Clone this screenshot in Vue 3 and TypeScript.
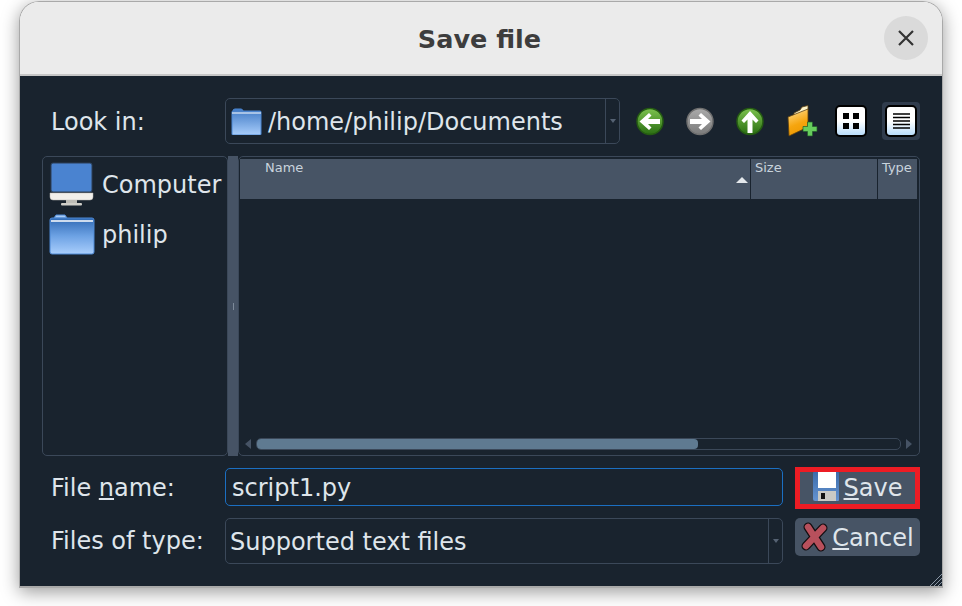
<template>
  <div class="window">
    <header class="titlebar">
      <h1 class="titlebar__title">Save file</h1>
      <button type="button" class="titlebar__close" aria-label="Close">
        <svg width="18" height="18" viewBox="0 0 18 18">
          <path d="M2 2 16 16M16 2 2 16" stroke="#333" stroke-width="2.2" fill="none" />
        </svg>
      </button>
    </header>

    <main class="dialog">
      <div class="top-row">
        <label class="field-label field-label--low">Look in:</label>
        <div class="combo combo--path">
          <svg class="combo__folder" width="31" height="27" viewBox="0 0 31 27">
            <defs>
              <linearGradient id="folderSmall" x1="0" y1="0" x2="0" y2="1">
                <stop offset="0" stop-color="#3f79c4" />
                <stop offset="1" stop-color="#a8cdfb" />
              </linearGradient>
            </defs>
            <path d="M2 3q0-2 2-2h6q1.500 0 2 2h17q1 0 1 1v22q0 1-1 1H2q-1 0-1-1V4q0-1 1-1z" fill="url(#folderSmall)" stroke="#4d88d4" />
            <path d="M1 5h29" stroke="#fff" stroke-width="1.200" />
          </svg>
          <span class="combo__text">/home/philip/Documents</span>
          <span class="combo__arrow"><i></i></span>
        </div>
        <div class="toolbar">
          <button v-for="tool in navTools" :key="tool.name" type="button" class="tool tool--nav" :aria-label="tool.name">
            <svg width="28" height="29" viewBox="0 0 28 29">
              <defs>
                <linearGradient :id="`disc-${tool.name}`" x1="0" y1="0" x2="0" y2="1">
                  <stop offset="0" :stop-color="tool.light" />
                  <stop offset="1" :stop-color="tool.dark" />
                </linearGradient>
              </defs>
              <circle cx="14" cy="14.500" r="13" :fill="`url(#disc-${tool.name})`" :stroke="tool.rim" stroke-width="1.500" />
              <path :d="tool.arrow" fill="#fff" />
            </svg>
          </button>
          <button type="button" class="tool" aria-label="New folder">
            <svg width="30" height="32" viewBox="0 0 30 32">
              <defs>
                <linearGradient id="newFolder" x1="0" y1="0" x2="0.300" y2="1">
                  <stop offset="0" stop-color="#fff0c4" />
                  <stop offset="0.350" stop-color="#fbc04a" />
                  <stop offset="0.650" stop-color="#f6a50e" />
                  <stop offset="1" stop-color="#ee9a04" />
                </linearGradient>
              </defs>
              <path d="M8 8 14 5l2-3 6-1.500V6L8 12z" fill="#fdf3c8" stroke="#5d4010" stroke-width="0.800" />
              <path d="M2 12 22 4v18L3 31z" fill="url(#newFolder)" stroke="#5d4010" stroke-width="0.800" />
              <path d="M21.500 17h5v4.500H31v5h-4.500V31h-5v-4.500H17v-5h4.500z" fill="#66cc5c" stroke="#1f5a28" stroke-width="0.700" />
            </svg>
          </button>
          <button type="button" class="tool" aria-label="Icon view">
            <span class="view-btn">
              <svg width="16" height="16" viewBox="0 0 16 16">
                <path d="M0 0h6v6H0zM10 0h6v6h-6zM0 10h6v6H0zM10 10h6v6h-6z" fill="#000" />
              </svg>
            </span>
          </button>
          <button type="button" class="tool tool--active" aria-label="Detail view">
            <span class="view-btn">
              <svg width="17" height="16" viewBox="0 0 17 16">
                <path d="M0 1h17M0 4.500h17M0 8h17M0 11.500h17M0 15h17" stroke="#000" stroke-width="1.600" />
              </svg>
            </span>
          </button>
        </div>
      </div>

      <div class="browser">
        <aside class="sidebar">
          <div class="place">
            <svg class="place__icon" width="46" height="44" viewBox="0 0 46 44">
              <rect x="2" y="1" width="41" height="29" rx="2" fill="#4a83d0" stroke="#2c3f57" />
              <path d="M1 31h43v4q0 3-3 3H4q-3 0-3-3z" fill="#f1efeb" stroke="#b9b7b0" stroke-width="0.500" />
              <rect x="17" y="38" width="11" height="3" fill="#bdbcb6" />
              <rect x="12" y="41" width="21" height="2.500" rx="1" fill="#d0cfc9" />
            </svg>
            <span class="place__label">Computer</span>
          </div>
          <div class="place">
            <svg class="place__icon" width="46" height="41" viewBox="0 0 46 41">
              <defs>
                <linearGradient id="folderBig" x1="0" y1="0" x2="0" y2="1">
                  <stop offset="0" stop-color="#2f69b4" />
                  <stop offset="0.500" stop-color="#6da2e4" />
                  <stop offset="1" stop-color="#a9cefc" />
                </linearGradient>
              </defs>
              <path d="M5 4l2-3h9l2 3z" fill="#a9cbf5" stroke="#4d88d4" />
              <rect x="1" y="4" width="44" height="36" rx="2" fill="url(#folderBig)" stroke="#4d88d4" />
              <path d="M2 7h42" stroke="#fff" stroke-width="1.500" />
            </svg>
            <span class="place__label">philip</span>
          </div>
        </aside>
        <div class="splitter"><i></i></div>
        <section class="files">
          <div class="files__head">
            <div v-for="col in columns" :key="col.label" class="column" :class="col.cls">
              {{ col.label }}
            </div>
          </div>
          <div class="files__body"></div>
          <div class="hscroll">
            <i class="hscroll__arrow hscroll__arrow--left"></i>
            <div class="hscroll__track"><div class="hscroll__thumb"></div></div>
            <i class="hscroll__arrow hscroll__arrow--right"></i>
          </div>
        </section>
      </div>

      <div class="bottom">
        <label class="field-label field-label--low">File <u>n</u>ame:</label>
        <input class="name-input" type="text" value="script1.py" />
        <button type="button" class="action action--save">
          <svg width="26" height="29" viewBox="0 0 26 29">
            <defs>
              <linearGradient id="floppy" x1="0" y1="0" x2="0" y2="1">
                <stop offset="0" stop-color="#3c6cab" />
                <stop offset="1" stop-color="#6593d0" />
              </linearGradient>
            </defs>
            <path d="M1 0h24q1 0 1 1v27q0 1-1 1H2q-2 0-2-2V1q0-1 1-1z" fill="url(#floppy)" />
            <rect x="5" y="0" width="18" height="16" fill="#fff" />
            <rect x="5" y="19" width="18" height="10" fill="#c9c9c5" />
            <rect x="8" y="21" width="4" height="6" fill="#111" />
          </svg>
          <span><u>S</u>ave</span>
        </button>
        <label class="field-label">Files of type:</label>
        <div class="combo combo--type">
          <span class="combo__text">Supported text files</span>
          <span class="combo__arrow"><i></i></span>
        </div>
        <button type="button" class="action action--cancel">
          <svg width="27" height="30" viewBox="0 0 27 30">
            <path d="M7 5 20 25M22 6 5 24" stroke="#120d10" stroke-width="9" stroke-linecap="round" fill="none" />
            <path d="M7 5 20 25M22 6 5 24" stroke="#b8505c" stroke-width="6.500" stroke-linecap="round" fill="none" />
          </svg>
          <span class="action__label"><u>C</u>ancel</span>
        </button>
      </div>

      <svg class="grip" width="13" height="13" viewBox="0 0 13 13">
        <path d="M13 1 1 13M13 5 5 13M13 9 9 13" stroke="#8a97a6" stroke-width="1" />
      </svg>
    </main>
  </div>
</template>

<script setup lang="ts">
interface NavTool {
  name: string
  light: string
  dark: string
  rim: string
  arrow: string
}

const navTools: NavTool[] = [
  {
    name: 'back',
    light: '#7cc24e',
    dark: '#2a6e12',
    rim: '#255c12',
    arrow: 'M3.500 14.500 13 6l2.500 2.500-3.500 3.500h12v5H12l3.500 3.500L13 23z'
  },
  {
    name: 'forward',
    light: '#aaaaaa',
    dark: '#7b7b7b',
    rim: '#6f6f6f',
    arrow: 'M24.500 14.500 15 6l-2.500 2.500 3.500 3.500H4v5h12l-3.500 3.500L15 23z'
  },
  {
    name: 'up',
    light: '#7cc24e',
    dark: '#2a6e12',
    rim: '#255c12',
    arrow: 'M14 4 22.500 13.500 20 16l-3.500-3.500V26h-5V12.500L8 16l-2.500-2.500z'
  }
]

const columns = [
  { label: 'Name', cls: 'column--name' },
  { label: 'Size', cls: 'column--size' },
  { label: 'Type', cls: 'column--type' }
]
</script>

<style>
html,
body {
  background: #fff;
  height: 100%;
}

#app {
  height: 606px;
  overflow: hidden;
  display: flow-root;
}
</style>

<style scoped>
.window {
  box-sizing: border-box;
  width: 924px;
  height: 587px;
  margin: 1px 0 0 19px;
  border: 1px solid #a9a9a9;
  border-bottom-width: 2px;
  border-radius: 20px 20px 0 0;
  box-shadow: 0 4px 18px rgba(0, 0, 0, 0.4);
  display: flex;
  flex-direction: column;
  font-family: "DejaVu Sans", sans-serif;
  font-size: 24px;
  color: #dfe5eb;
  overflow: hidden;
}

.titlebar {
  flex: 0 0 74px;
  box-sizing: border-box;
  background: #ebebeb;
  border-bottom: 2px solid #c6c6c6;
  display: flex;
  align-items: center;
  justify-content: center;
  position: relative;
}

.titlebar__title {
  margin: 2px 0 0 -3px;
  font-size: 25.500px;
  font-weight: 700;
  color: #3d3d3d;
}

.titlebar__close {
  position: absolute;
  right: 14px;
  top: 14px;
  width: 44px;
  height: 44px;
  padding: 0;
  border: none;
  border-radius: 50%;
  background: #dadada;
  display: flex;
  align-items: center;
  justify-content: center;
}

.dialog {
  flex: 1;
  background: #19232e;
  padding: 22px 22px 0;
  display: flex;
  flex-direction: column;
  gap: 12px;
  position: relative;
}

.top-row {
  display: flex;
  align-items: center;
  height: 46px;
}

.field-label {
  flex: 0 0 174px;
  padding-left: 9px;
  white-space: nowrap;
}

.field-label--low {
  padding-top: 2px;
}

.combo {
  box-sizing: border-box;
  height: 46px;
  border: 1px solid #3b4859;
  border-radius: 5px;
  display: flex;
  align-items: center;
}

.combo--path {
  flex: 0 0 395px;
  padding-left: 5px;
}

.combo__folder {
  flex-shrink: 0;
  margin-right: 6px;
}

.combo__text {
  flex: 1;
  padding-top: 2px;
  white-space: nowrap;
}

.combo--type {
  padding-left: 4px;
}

.combo__arrow {
  flex: 0 0 13px;
  align-self: stretch;
  border-left: 1px solid #3b4859;
  display: flex;
  align-items: center;
  justify-content: center;
}

.combo__arrow i {
  width: 0;
  height: 0;
  border-left: 3.500px solid transparent;
  border-right: 3.500px solid transparent;
  border-top: 4px solid #556273;
}

.toolbar {
  flex: 1;
  display: flex;
  justify-content: flex-end;
  gap: 12px;
}

.tool {
  box-sizing: border-box;
  width: 38px;
  height: 38px;
  padding: 0;
  border: none;
  border-radius: 4px;
  background: transparent;
  display: flex;
  align-items: center;
  justify-content: center;
}

.tool svg {
  overflow: visible;
}

.tool--nav {
  padding-right: 2px;
}

.tool--active {
  background: #303c4d;
}

.view-btn {
  box-sizing: border-box;
  width: 32px;
  height: 32px;
  border: 2px solid #000;
  border-radius: 5px;
  background: linear-gradient(#fff 50%, #b9dcfb);
  display: flex;
  align-items: center;
  justify-content: center;
}

.browser {
  display: flex;
  height: 300px;
}

.sidebar {
  box-sizing: border-box;
  flex: 0 0 186px;
  border: 1px solid #3b4859;
  border-radius: 5px;
  padding-top: 2px;
}

.place {
  height: 50px;
  display: flex;
  align-items: center;
  padding-left: 6px;
  white-space: nowrap;
}

.place__icon {
  flex: 0 0 46px;
  margin-right: 7px;
}

.place__label {
  padding-top: 2px;
}

.splitter {
  flex: 0 0 10px;
  background: #465365;
  display: flex;
  align-items: center;
  justify-content: center;
}

.splitter i {
  width: 1px;
  height: 7px;
  background: #7d8a9a;
}

.files {
  flex: 1;
  box-sizing: border-box;
  border: 1px solid #3b4859;
  border-radius: 5px;
  padding: 2px 2px 0 1px;
  display: flex;
  flex-direction: column;
}

.files__head {
  display: flex;
  height: 40px;
  background: #475465;
  font-size: 13px;
  line-height: 18px;
  color: #c9d3dd;
}

.column {
  box-sizing: border-box;
  padding: 0 4px;
  border-right: 1px solid #19232e;
}

.column--name {
  flex: 0 0 511px;
  padding-left: 25px;
  position: relative;
}

/* sort indicator */
.column--name::after {
  content: "";
  position: absolute;
  right: 2px;
  bottom: 16px;
  border-left: 6px solid transparent;
  border-right: 6px solid transparent;
  border-bottom: 6px solid #e4e8ec;
}

.column--size {
  flex: 0 0 127px;
}

.column--type {
  flex: 1;
  border-right: none;
}

.files__body {
  flex: 1;
}

.hscroll {
  height: 12px;
  margin-bottom: 5px;
  display: flex;
  align-items: center;
  gap: 5px;
  padding: 0 5px;
}

.hscroll__arrow {
  width: 0;
  height: 0;
  border-top: 5px solid transparent;
  border-bottom: 5px solid transparent;
}

.hscroll__arrow--left {
  border-right: 6px solid #465365;
}

.hscroll__arrow--right {
  border-left: 6px solid #465365;
}

.hscroll__track {
  flex: 1;
  box-sizing: border-box;
  height: 12px;
  border: 1px solid #3b4859;
  border-radius: 5px;
}

.hscroll__thumb {
  width: 441px;
  height: 10px;
  border-radius: 4px;
  background: #5f7a91;
}

.bottom {
  display: grid;
  grid-template-columns: 173px 568px 12px 125px;
  grid-template-rows: 38px 46px;
  row-gap: 12px;
  align-items: center;
}

.name-input {
  box-sizing: border-box;
  grid-column: 2;
  width: 558px;
  margin-left: 10px;
  height: 38px;
  padding: 2px 6px 0;
  background: #19232e;
  border: 1px solid #1b6fc2;
  border-radius: 5px;
  color: inherit;
  font: inherit;
  outline: none;
}

.combo--type {
  grid-column: 2;
  width: 558px;
  margin-left: 10px;
}

.action {
  grid-column: 4;
  align-self: start;
  box-sizing: border-box;
  width: 125px;
  padding: 0;
  border: none;
  background: #475465;
  color: inherit;
  font: inherit;
  display: flex;
  align-items: center;
  justify-content: center;
}

.action--save {
  height: 42px;
  margin-top: -1px;
  margin-bottom: -3px;
  border: 5px solid #ed1c24;
  gap: 5px;
}

.action--save svg {
  align-self: flex-start;
}

.action--cancel {
  height: 38px;
  border-radius: 5px;
  gap: 4px;
}

.action__label {
  padding-top: 2px;
}

.grip {
  position: absolute;
  right: 0;
  bottom: 0;
}
</style>
